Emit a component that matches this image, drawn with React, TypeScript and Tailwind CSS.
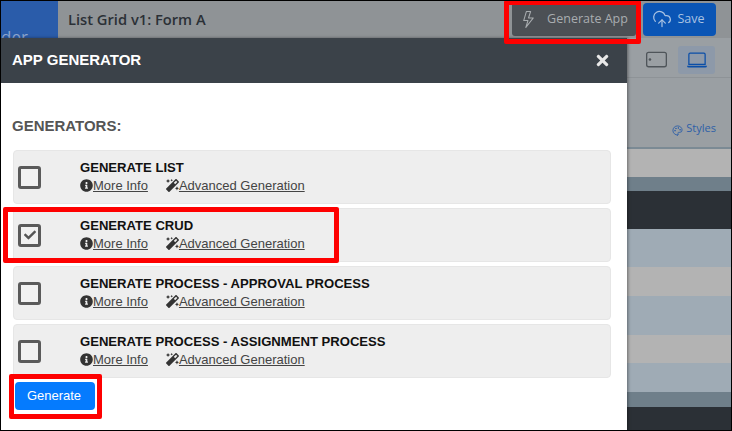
import { CloudUpload, Palette } from 'lucide-react'
import { BsLaptop, BsLightning, BsTablet } from 'react-icons/bs'
import { FaCheck, FaInfoCircle, FaMagic, FaTimes } from 'react-icons/fa'

const generators = [
  { title: 'GENERATE LIST', checked: false },
  { title: 'GENERATE CRUD', checked: true },
  { title: 'GENERATE PROCESS - APPROVAL PROCESS', checked: false },
  { title: 'GENERATE PROCESS - ASSIGNMENT PROCESS', checked: false },
]

// stripes of the dimmed page at the right of the dialog
const stripes = [
  { h: 'h-[7px]', c: 'bg-[#9a9fa3]' },
  { h: 'h-[2px]', c: 'bg-[#7b8a94]' },
  { h: 'h-[28px]', c: 'bg-[#b3b3b3]' },
  { h: 'h-[14px]', c: 'bg-[#6f7f8a]' },
  { h: 'h-[38px]', c: 'bg-[#2b3036]' },
  { h: 'h-[38px]', c: 'bg-[#9fabb5]' },
  { h: 'h-[29px]', c: 'bg-[#b3b3b3]' },
  { h: 'h-[39px]', c: 'bg-[#9fabb5]' },
  { h: 'h-[28px]', c: 'bg-[#b3b3b3]' },
  { h: 'h-[29px]', c: 'bg-[#9fabb5]' },
  { h: 'h-[15px]', c: 'bg-[#6f7f8a]' },
  { h: 'h-[25px]', c: 'bg-[#2b3036]' },
]

function GeneratorRow({ title, checked }: { title: string; checked: boolean }) {
  return (
    <div className="flex h-[54px] w-[598px] items-center rounded-[4px] border border-[#e6e6e6] bg-[#eeeeee] pl-[4px]">
      <div className="flex h-[23px] w-[23px] items-center justify-center rounded-[3px] border-[3px] border-[#5a5a5a] bg-[#f1f1f1]">
        {checked && <FaCheck size={12} className="text-[#555555]" />}
      </div>
      <div className="ml-[39px] flex flex-col">
        <div className="text-[13.1px] leading-[16px] font-bold text-[#111111]">{title}</div>
        <div className="mt-[1px] flex items-center text-[13px] leading-[17px] text-[#444444]">
          <FaInfoCircle size={13} className="text-[#333333]" />
          <span className="underline">More Info</span>
          <FaMagic size={13} className="ml-[18px] text-[#333333]" />
          <span className="underline">Advanced Generation</span>
        </div>
      </div>
    </div>
  )
}

export default function App() {
  return (
    <div className="relative h-[431px] w-[732px] overflow-hidden bg-[#9a9fa3] font-['Liberation_Sans',sans-serif]">
      {/* dimmed page */}
      <div className="flex h-[38px] items-center bg-[#8f9396]">
        <div className="relative h-full w-[58px] overflow-hidden bg-[#2a5caa]">
          <span className="absolute left-[1px] top-[27px] font-['Open_Sans',sans-serif] text-[17px] leading-[20px] text-[#8ea6cf]">der</span>
        </div>
        <div className="ml-[10px] font-['Open_Sans',sans-serif] text-[14.7px] font-semibold text-[#2b3036]">List Grid v1: Form A</div>
        <div className="ml-auto mr-[16px] flex items-center gap-[7px]">
          <div className="flex h-[34px] w-[124px] items-center justify-center gap-[10px] rounded-[3px] bg-[#4c5055] font-['Open_Sans',sans-serif] text-[12.5px] text-[#a9adb0]">
            <BsLightning size={17} />
            <span>Generate App</span>
          </div>
          <div className="flex h-[33px] w-[73px] items-center justify-center gap-[5px] rounded-[4px] bg-[#0a55b5] pr-[2px] font-['Open_Sans',sans-serif] text-[12.5px] text-[#a9c2e2]">
            <CloudUpload size={20} strokeWidth={1.5} />
            <span>Save</span>
          </div>
        </div>
      </div>
      <div className="flex h-[39px] items-center justify-end gap-[11px] bg-[#9a9fa3] pr-[17px] pt-[4px]">
        <BsTablet size={21} className="rotate-90 text-[#4f555a]" />
        <div className="flex h-[28px] w-[37px] items-center justify-center rounded-[3px] bg-[#8d99a9]">
          <BsLaptop size={20} className="text-[#0a4ea8]" />
        </div>
      </div>
      <div className="flex h-[63px] items-end justify-end gap-[3px] border-t border-[#8e9397] pb-[4px] pr-[16px] font-['Open_Sans',sans-serif] text-[11px] text-[#2e5fa8]">
        <Palette size={11} />
        <span>Styles</span>
      </div>
      <div className="ml-auto w-[105px]">
        {stripes.map((s, i) => (
          <div key={i} className={`${s.h} ${s.c}`} />
        ))}
      </div>

      {/* dialog */}
      <div className="absolute left-0 top-[38px] h-[393px] w-[627px] bg-white shadow-[1px_0_3px_rgba(0,0,0,0.4)]">
        <div className="flex h-[45px] items-center justify-between bg-[#3b4249] pl-[12px] pr-[16px]">
          <span className="text-[15px] font-bold text-white">APP GENERATOR</span>
          <FaTimes size={17} className="text-[#e8e8e8]" />
        </div>
        <div className="pl-[13px]">
          <div className="mt-[34px] -ml-[1px] text-[15px] leading-[17px] font-bold text-[#555555]">GENERATORS:</div>
          <div className="mt-[16px] flex flex-col gap-[4px]">
            {generators.map((g) => (
              <GeneratorRow key={g.title} title={g.title} checked={g.checked} />
            ))}
          </div>
          <div className="mt-[4px] ml-[2px] flex h-[28px] w-[80px] items-center justify-center rounded-[4px] bg-[#057bfe] pr-[2px] text-[13px] text-white">
            Generate
          </div>
        </div>
      </div>

      {/* annotations */}
      <div className="absolute left-[504px] top-0 h-[44px] w-[137px] rounded-[2px] border-[5px] border-[#fe0000]" />
      <div className="absolute left-[3px] top-[207px] h-[56px] w-[336px] rounded-[2px] border-[5px] border-[#fe0000]" />
      <div className="absolute left-[9px] top-[374px] h-[45px] w-[93px] rounded-[2px] border-[5px] border-[#fe0000]" />
      {/* screenshot frame */}
      <div className="pointer-events-none absolute inset-0 border border-black" />
    </div>
  )
}
